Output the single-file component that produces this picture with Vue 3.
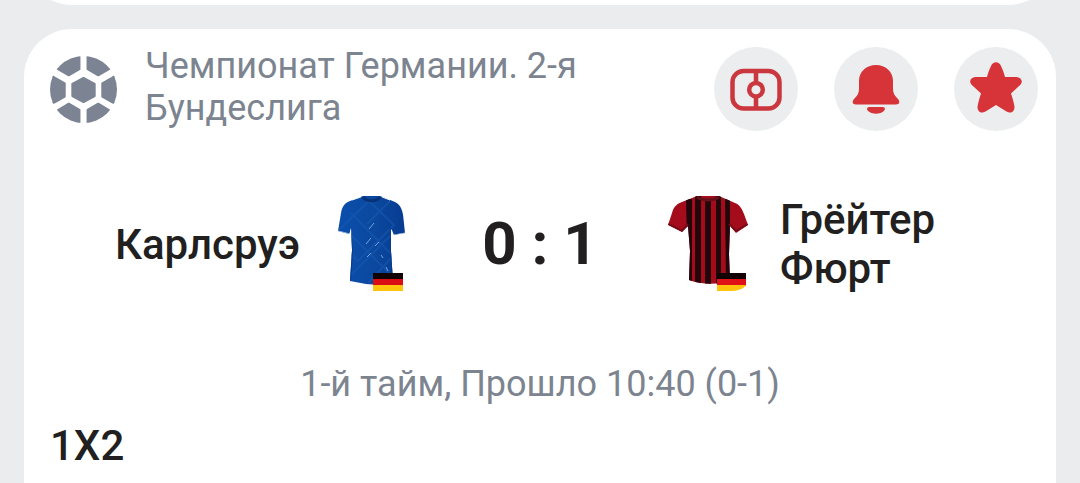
<script setup>
const league = 'Чемпионат Германии. 2-я Бундеслига'
const home = 'Карлсруэ'
const away = 'Грёйтер Фюрт'
const score = '0 : 1'
const status = '1-й тайм, Прошло 10:40 (0-1)'
const market = '1X2'
</script>

<template>
  <main class="feed">
    <section class="card previous" aria-hidden="true"></section>
    <article class="card match">
      <header class="head">
        <svg class="ball" viewBox="0 0 66 66" aria-hidden="true">
          <defs>
            <clipPath id="ball-clip"><circle cx="33" cy="33" r="33" /></clipPath>
          </defs>
          <g clip-path="url(#ball-clip)" fill="#7c8494" stroke="#7c8494" stroke-width="2" stroke-linejoin="round">
            <path d="M33 21.500L44 27.500V39.500L33 45.500L22 39.500V27.500Z" />
            <path d="M29 -3V13L18.500 19L7 12.500L2 0Z" />
            <path d="M37 -3V13L47.500 19L59 12.500L64 0Z" />
            <path d="M29 69V53L18.500 47L7.500 53.500L2 66Z" />
            <path d="M37 69V53L47.500 47L58.500 53.500L64 66Z" />
            <path d="M-4 16L5 21.500L14.500 27V40L5 45.500L-4 50Z" />
            <path d="M70 16L61 21.500L51.500 27V40L61 45.500L70 50Z" />
          </g>
        </svg>
        <h1 class="league">{{ league }}</h1>
        <div class="actions">
          <button type="button" class="action" aria-label="Трансляция">
            <svg viewBox="0 0 84 84" fill="none" stroke="#cb373f" stroke-width="4.500">
              <rect x="18.500" y="24" width="47" height="37.500" rx="11" />
              <path d="M42 24V35M42 50V61" />
              <circle cx="42" cy="42.700" r="6.800" />
            </svg>
          </button>
          <button type="button" class="action" aria-label="Уведомления">
            <svg viewBox="0 0 84 84" fill="#d63438">
              <path d="M42 18C32.500 18 25 24.500 25 34V42C25 46 23.500 48.500 20.500 51.500C17.500 54.500 18.500 57.500 22 57.500H62C65.500 57.500 66.500 54.500 63.500 51.500C60.500 48.500 59 46 59 42V34C59 24.500 51.500 18 42 18Z" />
              <path d="M35.500 60H48.500C52 60 51.500 63.500 48.500 65C45 67.300 39 67.300 35.500 65C32.500 63.500 32 60 35.500 60Z" />
            </svg>
          </button>
          <button type="button" class="action" aria-label="Избранное">
            <svg viewBox="0 0 84 84" fill="#d63438">
              <path d="M37 19C39 14 45 14 47 19C48.500 22 50 26 51 30H61C68.500 30 70 36 64.500 39.500L57 46.500C58.500 51 60 56 60.500 60C60.500 65 56.500 67 52.500 64.500L42 58L31.500 64.500C27.500 67 23.500 65 23.500 60C24 56 25.500 51 27 46.500L19.500 39.500C14 36 15.500 30 23 30H33C34 26 35.500 22 37 19Z" />
            </svg>
          </button>
        </div>
      </header>

      <div class="teams">
        <h2 class="team home">{{ home }}</h2>
        <svg class="shirt" viewBox="0 0 96 96" aria-hidden="true">
          <defs>
            <linearGradient id="blue-body" x1="0" x2="1" y1="0" y2="0">
              <stop offset="0" stop-color="#0a4fae" />
              <stop offset="0.500" stop-color="#0b499f" />
              <stop offset="1" stop-color="#063b90" />
            </linearGradient>
            <clipPath id="blue-clip">
              <path d="M39 0H56L71 6C77 9 79 15 79.500 23L81 37L70 39L67 32L67 55L69 85C61 88 51 89 42 88L26 85L28 54L27 32L25 38L14 35L17 17C18 10 21 7 26 5Z" />
            </clipPath>
          </defs>
          <g clip-path="url(#blue-clip)">
            <path d="M12 0H84V90H12Z" fill="url(#blue-body)" />
            <g fill="none" stroke="#1a5cb4" stroke-width="2" opacity="0.500">
              <path d="M14 35L45 5L70 29L34 65L26 57M27 17L69 60L44 87M27 39L67 79M43 28L69 2M27 79L68 38" />
            </g>
            <path d="M26 35L28 54L26 85M67 32V55L69 85" fill="none" stroke="#063b8d" stroke-width="2" />
            <path d="M14 35L26 38M70 39L81 37" stroke="#a9c9ec" stroke-width="1" />
            <path d="M42 48L47 42M43 61L47 57M51 50L55 46M57 59L59 62M62 71L64 75M45 33L50 27" stroke="#74a4df" stroke-width="1" />
          </g>
          <path d="M39 1C43 6 52 6 56 1" fill="none" stroke="#083275" stroke-width="3" />
          <path d="M28 4L37 1M58 1L66 4" stroke="#edf5fc" stroke-width="1" />
          <path d="M49 77H79V84H49Z" fill="#110305" />
          <path d="M49 83H79V90H49Z" fill="#da0c14" />
          <path d="M49 89H79V95H49Z" fill="#ffc40b" />
        </svg>
        <strong class="score">{{ score }}</strong>
        <svg class="shirt" viewBox="0 0 96 96" aria-hidden="true">
          <defs>
            <clipPath id="red-clip">
              <path d="M37 0H59L75 7C80 9 82 13 84 18L88 29L76 37L70 30L69 58L70 84C60 89 42 89 29 84L30 55L28 30L22 36L8 29L12 17C14 10 17 8 22 6Z" />
            </clipPath>
          </defs>
          <g clip-path="url(#red-clip)">
            <path d="M7 0H89V90H7Z" fill="#a50c1b" />
            <path d="M26 3H32V88H28ZM35 0H41V90H35ZM45 4H51V90H45ZM56 0H61V90H56ZM65 3H70V88H66Z" fill="#22060c" />
            <path d="M8 28L22 35L28 28M88 28L76 35L69 28" fill="none" stroke="#720c18" stroke-width="2" />
          </g>
          <path d="M37 1C43 5 53 5 59 1" fill="none" stroke="#65101a" stroke-width="3" />
          <path d="M57 77H86V84H57Z" fill="#110305" />
          <path d="M57 83H86V90H57Z" fill="#df1016" />
          <path d="M57 89H86C84 93 77 95 69 95H57Z" fill="#ffc40b" />
        </svg>
        <h2 class="team away">{{ away }}</h2>
      </div>

      <p class="status">{{ status }}</p>
      <h3 class="market">{{ market }}</h3>
    </article>
  </main>
</template>

<style>
body {
  margin: 0;
  background: #eaecee;
}
</style>

<style scoped>
.feed {
  display: flex;
  flex-direction: column;
  gap: 24px;
  height: 100vh;
  overflow: hidden;
  background: #eaecee;
  font-family: Roboto, "Noto Sans", sans-serif;
  color: #221f20;
}

.card {
  background: #fff;
}

.previous {
  flex: none;
  height: 48px;
  margin: -43px 24px 0;
  border-radius: 0 0 48px 48px;
}

.match {
  flex: 1 0 auto;
  margin: 0 24px;
  padding: 16px 18px 16px 26px;
  border-radius: 48px 48px 0 0;
}

h1,
h2,
h3,
p {
  margin: 0;
}

.head {
  display: flex;
  align-items: center;
  gap: 28px;
}

.ball {
  flex: none;
  width: 67px;
  height: 67px;
  margin-top: 2px;
}

.league {
  flex: 1;
  align-self: flex-start;
  max-width: 480px;
  font-size: 36px;
  line-height: 42px;
  font-weight: 400;
  color: #7c8490;
}

.actions {
  display: flex;
  gap: 36px;
  margin: 2px 0 0 auto;
}

.action {
  width: 84px;
  height: 84px;
  padding: 0;
  border: 0;
  border-radius: 50%;
  background: #ebedee;
  cursor: pointer;
}

.action svg {
  display: block;
  width: 84px;
  height: 84px;
}

.teams {
  display: grid;
  grid-template-columns: 1fr 96px 192px 96px 1fr;
  column-gap: 24px;
  align-items: center;
  margin: 62px 8px 0 0;
  min-height: 102px;
}

.team {
  font-size: 42px;
  line-height: 49px;
  font-weight: 500;
}

.home {
  text-align: right;
}

.away {
  max-width: 200px;
}

.shirt {
  display: block;
  width: 96px;
  height: 96px;
}

.score {
  font-size: 60px;
  line-height: 72px;
  font-weight: 700;
  text-align: center;
}

.status {
  margin: 68px 8px 0 0;
  font-size: 36px;
  line-height: 42px;
  text-align: center;
  color: #7c8490;
}

.market {
  margin-top: 16px;
  font-size: 42px;
  line-height: 49px;
  font-weight: 500;
}
</style>
